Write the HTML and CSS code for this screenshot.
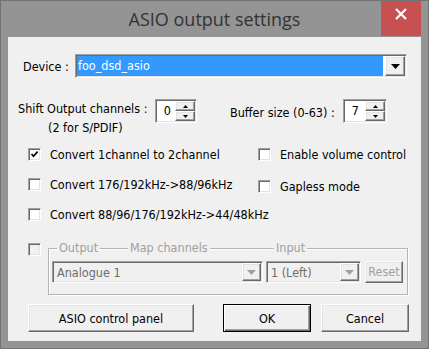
FILE: index.html
```html
<!DOCTYPE html>
<html>
<head>
<meta charset="utf-8">
<link rel="stylesheet" href="styles.css">
</head>
<body>
<div class="window">
  <div class="titlebar">
    <div class="title">ASIO output settings</div>
    <div class="close">
      <svg width="40" height="35" viewBox="0 0 40 35"><path d="M15 8 L25 18 M25 8 L15 18" stroke="#fff" stroke-width="2.2" fill="none"/></svg>
    </div>
  </div>
  <div class="client">
    <div class="device-row">
      <span class="device-lbl">Device :</span>
      <div class="combo field">
        <div class="combo-sel">foo_dsd_asio</div>
        <div class="dd-btn raised"><svg width="9" height="5" viewBox="0 0 9 5"><path d="M0 0 H9 L4.5 5 Z" fill="#000"/></svg></div>
      </div>
    </div>

    <div class="spin-row">
      <div class="shift-lbl">
        <div class="l1">Shift Output channels :</div>
        <div class="l2">(2 for S/PDIF)</div>
      </div>
      <div class="spin field spin-a">
        <div class="spin-val">0</div>
        <div class="spin-btns">
          <div class="sb raised"><svg width="5" height="3" viewBox="0 0 5 3"><path d="M0 3 H5 L2.5 0 Z" fill="#000"/></svg></div>
          <div class="sb raised"><svg width="5" height="3" viewBox="0 0 5 3"><path d="M0 0 H5 L2.5 3 Z" fill="#000"/></svg></div>
        </div>
      </div>
      <div class="buf-lbl">Buffer size (0-63) :</div>
      <div class="spin field spin-b">
        <div class="spin-val">7</div>
        <div class="spin-btns">
          <div class="sb raised"><svg width="5" height="3" viewBox="0 0 5 3"><path d="M0 3 H5 L2.5 0 Z" fill="#000"/></svg></div>
          <div class="sb raised"><svg width="5" height="3" viewBox="0 0 5 3"><path d="M0 0 H5 L2.5 3 Z" fill="#000"/></svg></div>
        </div>
      </div>
    </div>

    <div class="checks">
      <div class="col col-left">
        <label class="chk"><span class="cb"><svg width="9" height="9" viewBox="0 0 9 9"><path d="M1.5 4 L3.5 6.3 L7.6 1.6" stroke="#000" stroke-width="1.7" fill="none"/></svg></span><span>Convert 1channel to 2channel</span></label>
        <label class="chk"><span class="cb"></span><span>Convert 176/192kHz-&gt;88/96kHz</span></label>
        <label class="chk"><span class="cb"></span><span>Convert 88/96/176/192kHz-&gt;44/48kHz</span></label>
      </div>
      <div class="col col-right">
        <label class="chk"><span class="cb"></span><span>Enable volume control</span></label>
        <label class="chk"><span class="cb"></span><span>Gapless mode</span></label>
      </div>
    </div>

    <div class="map-row">
      <span class="cb cb-disabled"></span>
      <div class="group">
        <span class="legend lg-out">Output</span>
        <span class="legend lg-map">Map channels</span>
        <span class="legend lg-in">Input</span>
        <div class="group-row">
          <div class="dcombo field dc-out">
            <span class="dc-text">Analogue 1</span>
            <div class="dd-btn raised"><svg width="9" height="5" viewBox="0 0 9 5"><path d="M0 0 H9 L4.5 5 Z" fill="#a0a0a0"/></svg></div>
          </div>
          <div class="dcombo field dc-in">
            <span class="dc-text">1 (Left)</span>
            <div class="dd-btn raised"><svg width="9" height="5" viewBox="0 0 9 5"><path d="M0 0 H9 L4.5 5 Z" fill="#a0a0a0"/></svg></div>
          </div>
          <div class="btn raised reset">Reset</div>
        </div>
      </div>
    </div>

    <div class="btn-row">
      <div class="btn raised btn-asio">ASIO control panel</div>
      <div class="btn raised btn-default btn-ok">OK</div>
      <div class="btn raised btn-cancel">Cancel</div>
    </div>
  </div>
</div>
</body>
</html>
```

FILE: styles.css
```css
* { box-sizing: border-box; }
html, body { margin: 0; padding: 0; }
body {
  width: 429px;
  height: 349px;
  overflow: hidden;
  font-family: "DejaVu Sans Condensed", "DejaVu Sans", sans-serif;
  font-stretch: condensed;
  font-size: 12.5px;
  color: #000;
}
.window {
  width: 429px;
  height: 349px;
  background: #949494;
  border: 1px solid #727272;
  display: flex;
  flex-direction: column;
}
.titlebar {
  height: 36px;
  flex: none;
  position: relative;
  display: flex;
  justify-content: center;
}
.title {
  font-family: "Open Sans", sans-serif;
  font-stretch: normal;
  font-size: 18px;
  line-height: 36px;
  color: #333;
}
.close {
  position: absolute;
  top: 0;
  right: 7px;
  width: 40px;
  height: 35px;
  background: #c75050;
}
.close svg { display: block; }
.client {
  flex: 1;
  margin: 0 7px 7px 7px;
  background: #f0f0f0;
  padding-top: 17px;
  display: flex;
  flex-direction: column;
}

/* 3D borders */
.field {
  border: 1px solid;
  border-color: #a0a0a0 #fff #fff #a0a0a0;
  box-shadow: inset 1px 1px 0 #696969, inset -1px -1px 0 #e3e3e3;
  padding: 1px;
}
.raised {
  background: #f0f0f0;
  border: 1px solid;
  border-color: #fff #696969 #696969 #fff;
  box-shadow: inset -1px -1px 0 #a0a0a0, inset 1px 1px 0 #e3e3e3;
}

/* Device */
.device-row {
  height: 24px;
  display: flex;
  align-items: center;
  padding-left: 15px;
}
.device-lbl { width: 52px; }
.combo {
  width: 332px;
  height: 24px;
  background: #fff;
  display: flex;
}
.combo-sel {
  flex: 1;
  background: #3399ff;
  color: #fff;
  padding-left: 1px;
  line-height: 20px;
  margin-right: 2px;
}
.dd-btn {
  width: 20px;
  height: 20px;
  display: flex;
  align-items: center;
  justify-content: center;
}
.dd-btn svg { display: block; }

/* Spinners */
.spin-row {
  margin-top: 21px;
  height: 38px;
  display: flex;
  align-items: flex-start;
  padding-left: 10px;
}
.shift-lbl { width: 137px; line-height: 16px; white-space: nowrap; }
.l1 { margin-top: 2px; }
.l2 { margin-top: 3px; padding-left: 30px; }
.spin {
  height: 24px;
  background: #fff;
  display: flex;
}
.spin-a { width: 42px; }
.spin-b { width: 44px; }
.spin-val {
  flex: 1;
  text-align: right;
  padding-right: 4px;
  line-height: 20px;
}
.spin-b .spin-val { padding-right: 6px; }
.spin-btns {
  width: 20px;
  display: flex;
  flex-direction: column;
}
.sb {
  height: 10px;
  display: flex;
  align-items: center;
  justify-content: center;
}
.sb svg { display: block; }
.buf-lbl {
  margin-left: 33px;
  width: 113px;
  line-height: 16px;
  margin-top: 6px;
  white-space: nowrap;
}

/* Checkboxes */
.checks {
  margin-top: 11px;
  display: flex;
}
.col {
  display: flex;
  flex-direction: column;
}
.col-left { padding-left: 20px; width: 250px; gap: 17px; }
.col-right { gap: 19px; }
.chk {
  display: flex;
  align-items: center;
  height: 13px;
  line-height: 13px;
  gap: 9px;
  white-space: nowrap;
}
.cb {
  width: 13px;
  height: 13px;
  flex: none;
  background: #fff;
  border: 1px solid;
  border-color: #a0a0a0 #fff #fff #a0a0a0;
  box-shadow: inset 1px 1px 0 #696969, inset -1px -1px 0 #e3e3e3;
  display: flex;
  align-items: center;
  justify-content: center;
}
.cb svg { display: block; }
.cb-disabled { background: #f0f0f0; }

/* Map channels group */
.map-row {
  margin-top: 22px;
  height: 52px;
  display: flex;
  align-items: flex-start;
  padding-left: 20px;
  gap: 7px;
}
.group {
  position: relative;
  margin-top: 5px;
  width: 360px;
  height: 47px;
  border: 1px solid #b4b4b4;
  box-shadow: inset 1px 1px 0 #fff, 1px 1px 0 #fff;
  padding: 12px 0 0 3px;
}
.legend {
  position: absolute;
  top: -8px;
  line-height: 14px;
  padding: 0 2px;
  background: #f0f0f0;
  color: #a0a0a0;
}
.lg-out { left: 8px; }
.lg-map { left: 79px; }
.lg-in { left: 225px; }
.group-row {
  display: flex;
  gap: 3px;
}
.dcombo {
  height: 22px;
  background: #f0f0f0;
  display: flex;
  align-items: center;
}
.dc-out { width: 211px; }
.dc-in { width: 95px; }
.dc-text {
  flex: 1;
  padding-left: 3px;
  color: #6d6d6d;
}
.dcombo .dd-btn { width: 19px; height: 18px; }
.reset {
  margin-left: 1px;
  width: 38px;
  height: 22px;
  color: #a0a0a0;
  line-height: 20px;
}

/* Buttons */
.btn {
  display: flex;
  align-items: center;
  justify-content: center;
}
.btn-row {
  margin-top: 9px;
  display: flex;
  padding-left: 20px;
}
.btn-row .btn { height: 28px; }
.btn-asio { width: 166px; }
.btn-ok { width: 88px; margin-left: 29px; }
.btn-cancel { width: 88px; margin-left: 10px; }
.btn-default {
  border-color: #000;
  box-shadow: inset 1px 1px 0 #fff, inset -1px -1px 0 #696969, inset -2px -2px 0 #a0a0a0;
}
```
